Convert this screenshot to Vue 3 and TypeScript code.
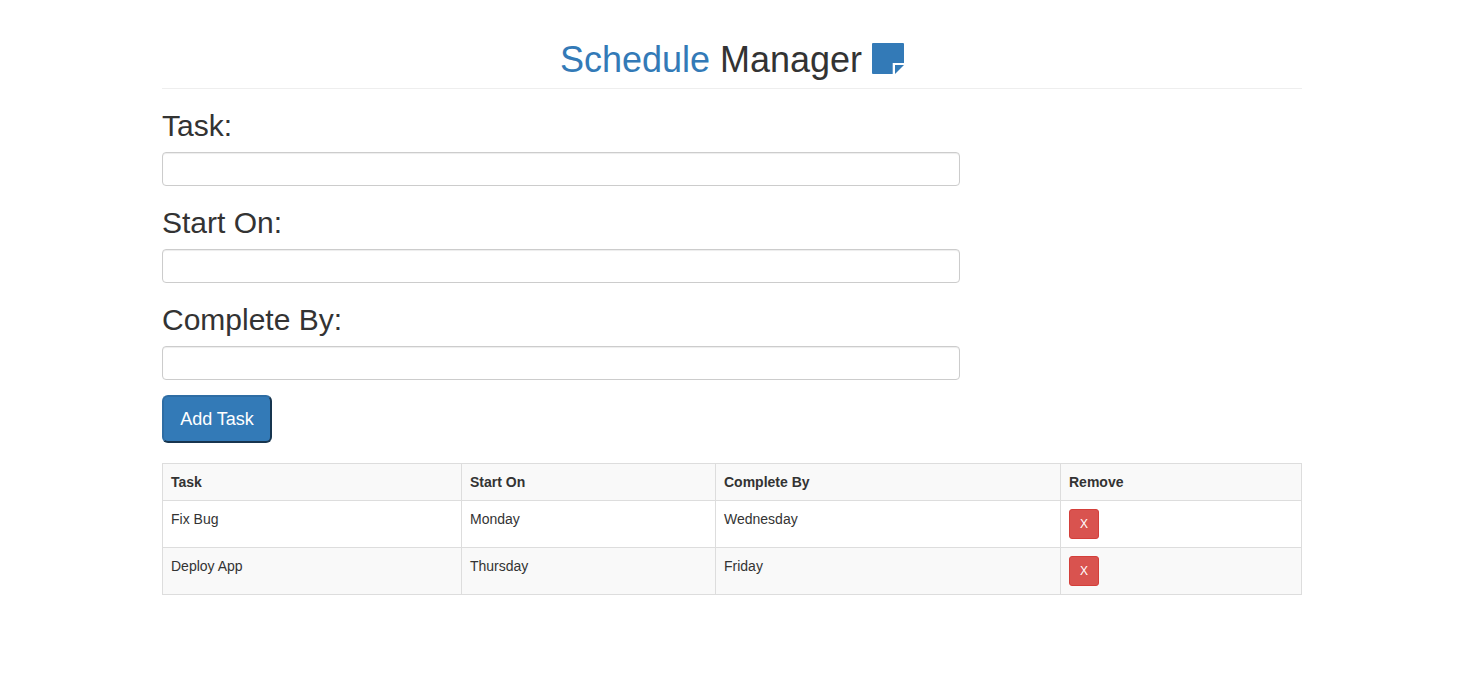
<script setup lang="ts">
import { ref } from 'vue'

interface Task {
  name: string
  start: string
  end: string
}

const name = ref('')
const start = ref('')
const end = ref('')
const tasks = ref<Task[]>([
  { name: 'Fix Bug', start: 'Monday', end: 'Wednesday' },
  { name: 'Deploy App', start: 'Thursday', end: 'Friday' },
])

function addTask(): void {
  if (!name.value) return
  tasks.value.push({ name: name.value, start: start.value, end: end.value })
  name.value = start.value = end.value = ''
}

function removeTask(index: number): void {
  tasks.value.splice(index, 1)
}
</script>

<template>
  <main class="container">
    <header class="page-header">
      <h1><span class="brand">Schedule</span> Manager
        <svg class="note" viewBox="0 0 32 31" aria-hidden="true">
          <path d="M1 0H31Q32 0 32 1V20H20.7V31H1Q0 31 0 30V1Q0 0 1 0Z" />
          <path d="M23 22H32L23 31Z" />
        </svg>
      </h1>
    </header>
    <form @submit.prevent="addTask">
      <label for="task">Task:</label>
      <input id="task" v-model="name" type="text">
      <label for="start">Start On:</label>
      <input id="start" v-model="start" type="text">
      <label for="end">Complete By:</label>
      <input id="end" v-model="end" type="text">
      <button class="add" type="submit">Add Task</button>
    </form>
    <table>
      <colgroup><col class="c1"><col class="c2"><col class="c3"><col class="c4"></colgroup>
      <thead>
        <tr><th>Task</th><th>Start On</th><th>Complete By</th><th>Remove</th></tr>
      </thead>
      <tbody>
        <tr v-for="(task, i) in tasks" :key="i">
          <td>{{ task.name }}</td>
          <td>{{ task.start }}</td>
          <td>{{ task.end }}</td>
          <td><button class="remove" type="button" @click="removeTask(i)">X</button></td>
        </tr>
      </tbody>
    </table>
  </main>
</template>

<style>
body {
  margin: 0;
  background: #fff;
}
</style>

<style scoped>
* {
  box-sizing: border-box;
}
.container {
  width: 1140px;
  margin: 0 auto;
  padding-top: 40px;
  font-family: "Liberation Sans", Arial, sans-serif;
  font-size: 14px;
  line-height: 20px;
  color: #333;
}
.page-header {
  height: 49px;
  border-bottom: 1px solid #eee;
  text-align: center;
}
h1 {
  margin: 0;
  font-size: 36px;
  font-weight: 500;
  line-height: 39.6px;
}
.brand {
  color: #337ab7;
}
.note {
  width: 32px;
  height: 31px;
  vertical-align: -2px;
  fill: #337ab7;
}
form {
  display: flex;
  flex-direction: column;
  align-items: flex-start;
  padding-top: 20px;
}
label {
  font-size: 30px;
  line-height: 33px;
  margin-bottom: 10px;
}
input {
  width: 798px;
  height: 34px;
  margin: 0 0 20px;
  padding: 6px 12px;
  border: 1px solid #ccc;
  border-radius: 4px;
  box-shadow: inset 0 1px 1px rgba(0, 0, 0, 0.075);
  font: inherit;
}
.add {
  width: 110px;
  height: 48px;
  margin-top: -5px;
  padding: 0;
  border: 2px solid;
  border-color: #2e6da4 #17354f #17354f #2e6da4;
  border-radius: 6px;
  background: #337ab7;
  color: #fff;
  font: 18px/24px "Liberation Sans", Arial, sans-serif;
}
table {
  width: 1140px;
  margin-top: 20px;
  border: 1px solid #ddd;
  border-collapse: collapse;
  table-layout: fixed;
}
.c1 {
  width: 299px;
}
.c2 {
  width: 254px;
}
.c3 {
  width: 345px;
}
th,
td {
  padding: 8px;
  border: 1px solid #ddd;
  text-align: left;
  vertical-align: top;
}
thead tr,
tbody tr:nth-child(even) {
  background: #f9f9f9;
}
.remove {
  display: block;
  width: 30px;
  height: 30px;
  padding: 0;
  border: 1px solid #d43f3a;
  border-radius: 3px;
  background: #d9534f;
  color: #fff;
  font: 12px/18px "Liberation Sans", Arial, sans-serif;
}
</style>
